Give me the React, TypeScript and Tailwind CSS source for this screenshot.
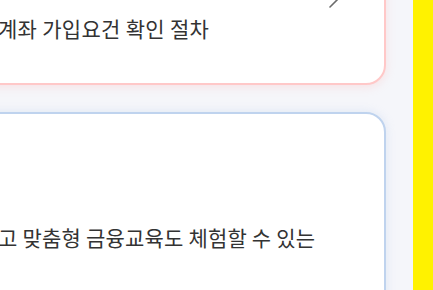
import React from "react";

const font = { fontFamily: '"Noto Sans CJK KR", "Noto Sans", sans-serif' };

export default function App() {
  return (
    <div className="flex h-[290px] w-[433px] overflow-hidden bg-[#f5f6fa]" style={font}>
      <div className="flex flex-1 flex-col gap-[27px]">
        <div className="relative -ml-[40px] mr-[27px] mt-[-60px] h-[145px] shrink-0 rounded-[20px] border-2 border-[#ffc8c8] bg-white pl-[36px] pt-[71px] shadow-[0_2px_10px_rgba(255,180,180,0.3)]">
          <svg
            className="absolute left-[366px] top-[48px]"
            width="12"
            height="18"
            viewBox="0 0 12 18"
            fill="none"
            stroke="#6b6b6b"
            strokeWidth="1.6"
            strokeLinecap="round"
          >
            <path d="M2 1l8 8-8 8" />
          </svg>
          <p className="text-[21px] leading-[30px] tracking-[0.3px] text-[#333]">계좌 가입요건 확인 절차</p>
        </div>
        <div className="relative -ml-[40px] mr-[27px] h-[220px] shrink-0 rounded-[20px] border-2 border-[#bfd3ee] bg-white pl-[36px] pt-[108px] shadow-[0_0_10px_rgba(170,195,235,0.3)]">
          <p className="text-[21px] leading-[30px] tracking-[0.2px] text-[#333]">고 맞춤형 금융교육도 체험할 수 있는</p>
        </div>
      </div>
      <div className="w-[20px] shrink-0 bg-[#fff200]" />
    </div>
  );
}
